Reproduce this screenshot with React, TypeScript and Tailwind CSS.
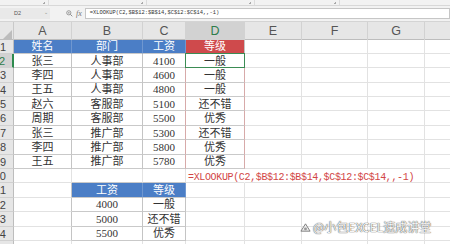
import React from "react";
import clsx from "clsx";

const COLS = ["A", "B", "C", "D", "E", "F", "G", "H"];

type Cell = { t: string; head?: "blue" | "red" };

const upper = [
  ["张三", "人事部", "4100", "一般"],
  ["李四", "人事部", "4600", "一般"],
  ["王五", "人事部", "4800", "一般"],
  ["赵六", "客服部", "5100", "还不错"],
  ["周期", "客服部", "5500", "优秀"],
  ["张三", "推广部", "5300", "还不错"],
  ["李四", "推广部", "5800", "优秀"],
  ["王五", "推广部", "5780", "优秀"],
];

const lower = [
  ["4000", "一般"],
  ["5000", "还不错"],
  ["5500", "优秀"],
];

const FORMULA = "=XLOOKUP(C2,$B$12:$B$14,$C$12:$C$14,,-1)";

const cells: Record<string, Cell> = {
  A1: { t: "姓名", head: "blue" },
  B1: { t: "部门", head: "blue" },
  C1: { t: "工资", head: "blue" },
  D1: { t: "等级", head: "red" },
  B11: { t: "工资", head: "blue" },
  C11: { t: "等级", head: "blue" },
};
upper.forEach((row, i) => row.forEach((t, c) => (cells[`${COLS[c]}${i + 2}`] = { t })));
lower.forEach((row, i) => row.forEach((t, c) => (cells[`${COLS[c + 1]}${i + 12}`] = { t })));

// A1:D9 and B11:C14 carry real borders, the rest is plain gridlines
const inTable = (c: number, r: number) =>
  (r >= 1 && r <= 9 && c >= 0 && c <= 3) || (r >= 11 && r <= 14 && c >= 1 && c <= 2);

const cellFont = "font-['Liberation_Serif','Noto_Sans_CJK_SC',serif]";
// column H runs past the window edge
const grid = "grid w-[490px] grid-cols-[14px_58px_71px_43px_59px_57px_66px_57px_65px]";

function FormulaBar() {
  return (
    <div className="bg-[#f2f2f2]">
      <div className="h-[6px] border-b border-[#d8d8d8] flex">
        {[49, 98, 108, 85].map((w, i) => (
          <div key={i} className="relative border-r border-[#dcdcdc]" style={{ width: w }}>
            <span className="absolute right-[3px] bottom-[1px] w-[2px] h-[2px] border-r border-b border-[#a8a8a8]" />
          </div>
        ))}
      </div>
      <div className="h-[16px] flex items-center border-b border-[#d4d4d4]">
        <div className="w-[50px] h-[11px] bg-[#e9e9e9] flex items-center relative">
          <span className="ml-[14px] text-[5.5px] text-[#555] font-['Liberation_Sans',sans-serif]">D2</span>
          <span className="absolute right-[2px] top-[2px] text-[5px] text-[#888] leading-none">⌄</span>
        </div>
        <svg width="7" height="7" viewBox="0 0 10 10" className="ml-[16px]">
          <circle cx="4" cy="4" r="3" fill="none" stroke="#8a8a8a" strokeWidth="1.2" />
          <path d="M6.2 6.2 L9 9" stroke="#8a8a8a" strokeWidth="1.4" />
          <path d="M2.8 4 H5.2 M4 2.8 V5.2" stroke="#8a8a8a" strokeWidth="0.9" />
        </svg>
        <span className="ml-[3px] text-[8px] italic text-[#777] font-['Liberation_Serif',serif]">fx</span>
        <div className="ml-[3px] flex-1 h-[11px] bg-white border border-[#c6c6c6] flex items-center">
          <span className="ml-[4px] text-[5.4px] text-[#333] font-['Liberation_Mono',monospace] whitespace-nowrap">
            {FORMULA}
          </span>
        </div>
      </div>
    </div>
  );
}

function ColumnHeader() {
  return (
    <div className={clsx(grid, "h-[17.5px] bg-[#e6e6e6] border-b border-[#bdbdbd]")}>
      <div className="relative border-r border-[#c9c9c9]">
        <svg width="9" height="9" className="absolute right-[1px] bottom-[2px]">
          <polygon points="9,0 9,9 0,9" fill="#bcbcbc" />
        </svg>
      </div>
      {COLS.map((c) => (
        <div
          key={c}
          className={clsx(
            "flex items-center justify-center border-r border-[#d2d2d2] text-[12.5px] font-['Liberation_Sans',sans-serif]",
            c === "D" ? "bg-[#d2d2d2] text-[#2e7d4a]" : "text-[#555]"
          )}
        >
          {c === "H" ? null : c}
        </div>
      ))}
    </div>
  );
}

function Row({ r }: { r: number }) {
  const active = r === 2;
  return (
    <div className={clsx(grid, "h-[14.4px]")}>
      <div
        className={clsx(
          "relative overflow-hidden border-b border-[#d0d0d0] text-[11px] leading-none font-['Liberation_Sans',sans-serif]",
          active ? "bg-[#d2d2d2] text-[#2e7d4a] border-r-2 border-r-[#2e8b4e]" : "bg-[#e6e6e6] text-[#444] border-r border-r-[#bdbdbd]"
        )}
      >
        <span className="absolute right-[7px] top-[2px] whitespace-nowrap">{r}</span>
      </div>
      {COLS.map((col, c) => {
        const cell = cells[`${col}${r}`];
        const rightDark = inTable(c, r) || inTable(c + 1, r);
        const bottomDark = inTable(c, r) || inTable(c, r + 1);
        const pink = (c === 3 || c === 2) && r >= 2 && r <= 9;
        const overflowed = r === 10 && (c === 3 || c === 4 || c === 5);
        const blue = cell?.head === "blue";
        const red = cell?.head === "red";
        return (
          <div
            key={col}
            className={clsx(
              "relative flex items-center justify-center whitespace-nowrap border-r border-b text-[11px] leading-none pt-[1px]",
              cellFont,
              blue && "bg-[#4b7ec6] text-white",
              red && "bg-[#cf4a4c] text-white",
              !blue && !red && "text-[#333]",
              overflowed
                ? "border-r-transparent"
                : (blue || red) && c < 3
                  ? "border-r-[#6f97d0]"
                  : pink
                    ? "border-r-[#d7aaa9]"
                    : rightDark
                      ? "border-r-[#c4c4c4]"
                      : "border-r-[#e2e2e2]",
              bottomDark ? "border-b-[#c9c9c9]" : "border-b-[#e2e2e2]"
            )}
          >
            {cell?.t}
            {r === 10 && c === 3 && (
              <span className="absolute left-[2px] top-[4px] z-10 text-[10px] tracking-[-0.35px] text-[#d24545] font-['Liberation_Mono',monospace]">
                {FORMULA}
              </span>
            )}
            {active && c === 3 && (
              <span className="absolute -left-[1px] -top-[1px] -right-[1px] -bottom-[1px] border-[1.5px] border-[#3b8c54]" />
            )}
          </div>
        );
      })}
    </div>
  );
}

export default function App() {
  const rows = Array.from({ length: 15 }, (_, i) => i + 1);
  return (
    <div className="relative w-[450px] h-[244px] overflow-hidden bg-white">
      <FormulaBar />
      <ColumnHeader />
      {rows.map((r) => (
        <Row key={r} r={r} />
      ))}
      <div className="absolute left-[300px] top-[221px] flex items-center gap-[2px] text-[12px] leading-none text-[#f5f5f5] font-['Noto_Sans_CJK_SC',sans-serif] [text-shadow:0_0_1px_#555,0_0_1px_#555]">
        <svg width="11" height="11" viewBox="0 0 12 12">
          <path d="M1 10 L6 2 L11 10 Z" fill="#eee" stroke="#777" strokeWidth="1" />
          <circle cx="6" cy="7.5" r="1.6" fill="#999" />
        </svg>
        <span>@小包EXCEL速成讲堂</span>
      </div>
    </div>
  );
}
